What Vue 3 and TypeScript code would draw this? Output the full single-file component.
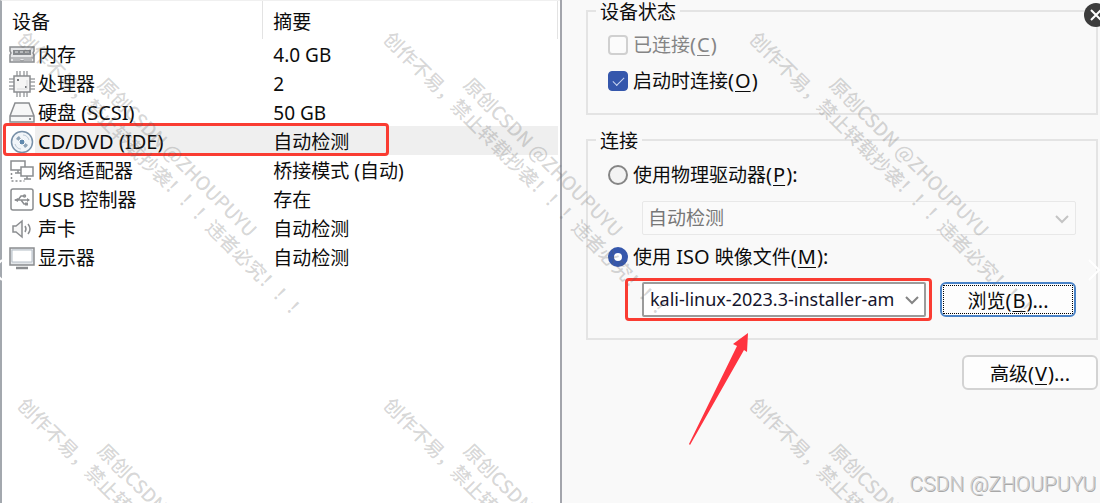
<script setup lang="ts">
import { ref } from 'vue'

interface Device {
  icon: string
  name: string
  spec?: string
  summary: string
}

const devices: Device[] = [
  { icon: 'memory', name: '内存', summary: '4.0 GB' },
  { icon: 'cpu', name: '处理器', summary: '2' },
  { icon: 'disk', name: '硬盘', spec: ' (SCSI)', summary: '50 GB' },
  { icon: 'cd', name: '', spec: 'CD/DVD (IDE)', summary: '自动检测' },
  { icon: 'network', name: '网络适配器', summary: '桥接模式 (自动)' },
  { icon: 'usb', name: 'USB 控制器', summary: '存在' },
  { icon: 'sound', name: '声卡', summary: '自动检测' },
  { icon: 'display', name: '显示器', summary: '自动检测' },
]

const selected = ref('cd')
const connected = ref(false)
const connectAtStart = ref(true)
const source = ref('iso')
const drive = ref('auto')
const iso = ref('kali')

const tiles = [0, 366].flatMap((y) => [0, 366, 732].map((x) => ({ x, y })))
</script>

<template>
  <main class="page">
    <section class="devices">
      <table>
        <thead>
          <tr>
            <th class="col-name" scope="col">设备</th>
            <th scope="col">摘要</th>
          </tr>
        </thead>
        <tbody>
          <tr
            v-for="d in devices"
            :key="d.icon"
            :class="{ selected: selected === d.icon }"
            @click="selected = d.icon"
          >
            <td>
              <div class="device">
                <svg class="icon" viewBox="0 0 26 26" fill="none" stroke="#8b8d90" stroke-width="1.5" aria-hidden="true">
                  <template v-if="d.icon === 'memory'">
                    <path d="M1 5h24v4l-1 2 1 2v7H1v-7l1-2-1-2z" fill="#e6e7e9" />
                    <path d="M4 8h18v5H4z" fill="#85888c" stroke="none" />
                    <path d="M6 10h3M11 10h3M16 10h4" stroke="#c9cbce" />
                    <path d="M2 16h23M4 18h7l2 1 2-1h8" stroke-width="1" />
                  </template>
                  <template v-else-if="d.icon === 'cpu'">
                    <path d="M8 0v5M11 0v5M15 0v5M18 0v5M8 21v5M11 21v5M15 21v5M18 21v5M0 8h5M0 11h5M0 15h5M0 18h5M21 8h5M21 11h5M21 15h5M21 18h5" stroke="#a3a5a8" />
                    <rect x="5" y="5" width="16" height="16" fill="#f5f5f5" />
                    <path d="M8 9h2M16 16h2" stroke="#77797c" stroke-width="2" />
                    <path d="M8 18h10V9" stroke="#d9dadc" stroke-width="1" />
                  </template>
                  <template v-else-if="d.icon === 'disk'">
                    <path d="M6 3h14l5 13v6H1v-6z" fill="#f7f7f7" />
                    <path d="M1 16h24" />
                    <path d="M20 19h2" stroke-width="2" />
                  </template>
                  <template v-else-if="d.icon === 'cd'">
                    <circle cx="13" cy="13" r="10.5" fill="#f1f5f9" stroke="#7890a8" />
                    <path d="M7 10a7 7 0 0 1 3-3l2 3-2 2zM19 16a7 7 0 0 1-3 3l-2-3 2-2z" fill="#8fa4b8" stroke="none" />
                    <path d="M14 6c3 0 5 2 6 5M6 15c1 3 3 5 6 5" stroke="#bdcad6" stroke-width="1" />
                    <circle cx="13" cy="13" r="3" fill="#5f88ad" stroke="#fff" stroke-width="1" />
                  </template>
                  <template v-else-if="d.icon === 'network'">
                    <path d="M2 3h14v9H2z" fill="#fff" />
                    <path d="M6 15h6M9 12v3" />
                    <path d="M12 9h12v9H12z" fill="#fff" />
                    <path d="M15 21h7M18 18v3" />
                    <path d="M2.5 15v8h13" stroke-dasharray="2 2" />
                  </template>
                  <template v-else-if="d.icon === 'usb'">
                    <rect x="2" y="2" width="22" height="21" rx="2" fill="#fff" />
                    <path d="M6 13h14M9 13l3-4h3M12 13l3 4h3" stroke-width="1.5" />
                    <path d="M5 13l4-2v4zM21 13l-3-2v4z" fill="#8b8d90" stroke="none" />
                    <circle cx="15.500" cy="9" r="1" />
                    <path d="M16 17h3" stroke-width="3" />
                  </template>
                  <template v-else-if="d.icon === 'sound'">
                    <path d="M4 10h3l6-5v16l-6-5H4z" fill="#f7f7f7" />
                    <path d="M16 10q2 3 0 6M19 8q4 5 0 10" />
                  </template>
                  <template v-else>
                    <path d="M1 3h24v17H1z" fill="#e4e7ea" />
                    <path d="M3 5h20v12H3z" fill="#fff" stroke="#b4bdc6" stroke-width="1" />
                    <path d="M7 23h12" stroke-width="2.500" />
                  </template>
                </svg>
                <span class="label">{{ d.name }}<span v-if="d.spec" class="spec">{{ d.spec }}</span></span>
              </div>
            </td>
            <td>{{ d.summary }}</td>
          </tr>
        </tbody>
      </table>
    </section>

    <section class="settings">
      <fieldset class="status">
        <legend>设备状态</legend>
        <label class="option off">
          <input v-model="connected" type="checkbox" disabled />
          <span>已连接<span class="key">(<u>C</u>)</span></span>
        </label>
        <label class="option">
          <input v-model="connectAtStart" type="checkbox" />
          <span>启动时连接<span class="key">(<u>O</u>)</span></span>
        </label>
      </fieldset>

      <fieldset class="connection">
        <legend>连接</legend>
        <label class="option">
          <input v-model="source" type="radio" name="source" value="physical" />
          <span>使用物理驱动器<span class="key">(<u>P</u>):</span></span>
        </label>
        <div class="combo drive">
          <select v-model="drive" aria-label="物理驱动器" disabled>
            <option value="auto">自动检测</option>
          </select>
          <svg class="chevron" viewBox="0 0 16 10" aria-hidden="true"><path d="M2 2l6 6 6-6" /></svg>
        </div>
        <label class="option">
          <input v-model="source" type="radio" name="source" value="iso" />
          <span>使用<span class="key"> ISO </span>映像文件<span class="key">(<u>M</u>):</span></span>
        </label>
        <div class="file">
          <div class="combo marked">
            <select v-model="iso" aria-label="ISO 映像文件">
              <option value="kali">kali-linux-2023.3-installer-amd64.iso</option>
            </select>
            <svg class="chevron" viewBox="0 0 16 10" aria-hidden="true"><path d="M2 2l6 6 6-6" /></svg>
            <svg class="arrow" viewBox="0 0 60 112" aria-hidden="true">
              <path d="M59 0L44 11l4 2L0 111l1 1L55 17l3 2z" />
            </svg>
          </div>
          <button class="btn browse" type="button">浏览<span class="key">(<u>B</u>)...</span></button>
        </div>
      </fieldset>

      <button class="btn advanced" type="button">高级<span class="key">(<u>V</u>)...</span></button>
    </section>

    <svg class="watermark" aria-hidden="true">
      <g v-for="t in tiles" :key="`${t.x}-${t.y}`" :transform="`translate(${t.x} ${t.y}) rotate(45)`">
        <text x="129" y="-7">原创CSDN @ZHOUPUYU</text>
        <text x="40" y="17">创作不易，禁止转载抄袭！！！违者必究！！！</text>
      </g>
    </svg>

    <button class="close" type="button" aria-label="关闭">
      <svg viewBox="0 0 24 24"><path d="M7 7l10 10M17 7L7 17" /></svg>
    </button>
    <button class="nav prev" type="button" aria-label="上一张">
      <svg viewBox="0 0 12 22"><path d="M11 1L1 11l10 10" /></svg>
    </button>
    <button class="nav next" type="button" aria-label="下一张">
      <svg viewBox="0 0 12 22"><path d="M1 1l10 10L1 21" /></svg>
    </button>
    <div class="credit">CSDN @ZHOUPUYU</div>
  </main>
</template>

<style>
body {
  margin: 0;
}
</style>

<style scoped>
.page {
  position: relative;
  display: grid;
  grid-template-columns: 560fr 540fr;
  min-height: 100vh;
  overflow: hidden;
  background: #f9f9f9;
  color: #0c0c0c;
  font: 19px/24px 'Noto Sans', 'Noto Sans CJK SC', sans-serif;
}

.page * {
  box-sizing: border-box;
}

u {
  padding: 0 1px;
  text-decoration-thickness: 1px;
  text-underline-offset: 3px;
}

.key,
.spec {
  font-size: 20px;
  white-space: pre-wrap;
}

.devices {
  border-left: 2px solid #a3a8ae;
  border-top: 1px solid #f0f0f0;
  background: #fff;
  padding-right: 2px;
}

table {
  width: 100%;
  border-collapse: separate;
  border-spacing: 0;
  table-layout: fixed;
}

th {
  height: 38px;
  padding: 4px 0 0 10px;
  border-right: 1px solid #e3e3e3;
  font-weight: 400;
  text-align: left;
}

.col-name {
  width: 47%;
}

td {
  height: 29px;
  padding: 2px 0 0 10px;
  white-space: nowrap;
}

td:first-child {
  position: relative;
  padding-left: 7px;
}

.device {
  display: flex;
  align-items: center;
  gap: 3px;
}

.icon {
  flex: none;
  width: 26px;
  height: 26px;
}

.selected td {
  background: #efefef;
}

.selected td:first-child {
  background: linear-gradient(90deg, #fff 33px, #efefef 33px);
}

.selected td:first-child::after {
  content: '';
  position: absolute;
  inset: -3px -48% -1px 1px;
  border: 3px solid #fa3c32;
  border-radius: 4px;
}

.settings {
  display: flex;
  flex-direction: column;
  border-left: 2px solid #a3a5ac;
  padding: 0 2px 0 24px;
}

fieldset {
  display: flex;
  flex-direction: column;
  min-width: 0;
  margin: 0;
  border: 2px solid #e4e4e4;
}

legend {
  padding: 2px 4px 0;
  line-height: 20px;
}

.status {
  gap: 12px;
  padding: 11px 20px 20px 8px;
}

.connection {
  margin-top: 14px;
  padding: 12px 20px 21px 8px;
}

.option {
  display: flex;
  align-items: center;
  gap: 5px;
  height: 24px;
  padding-left: 12px;
}

.option.off {
  color: #858585;
}

.option input {
  display: grid;
  place-items: center;
  flex: none;
  appearance: none;
  width: 20px;
  height: 20px;
  margin: 0;
  border: 1px solid #777;
  border-radius: 4px;
  background: #f3f3f3;
}

.option input:disabled {
  border: 2px solid #d0d0d0;
  background: #fbfbfb;
}

.option input[type='radio'] {
  border: 2px solid #858585;
  border-radius: 50%;
}

.option input[type='checkbox']:checked {
  border-color: #3557ac;
  background: #3557ac;
}

.option input[type='checkbox']:checked::before {
  content: '';
  width: 10px;
  height: 5px;
  margin-bottom: 3px;
  border: solid #c9d5f1;
  border-width: 0 0 1px 1px;
  transform: rotate(-45deg);
}

.option input[type='radio']:checked {
  border: 6px solid #3557ac;
  background: #fff;
}

.combo {
  position: relative;
  display: flex;
  flex: 1;
  min-width: 0;
}

.combo select {
  appearance: none;
  width: 100%;
  height: 35px;
  margin: 0;
  padding: 0 30px 2px 6px;
  border: 2px solid #9b9b9b;
  border-radius: 2px;
  background: #fff;
  color: #15152c;
  font: 18px/24px 'Noto Sans', 'Noto Sans CJK SC', sans-serif;
}

.combo.drive {
  flex: none;
  margin: 14px 0 10px 46px;
}

.combo.drive select {
  height: 34px;
  padding: 0 30px 0 5px;
  border: 1px solid #e8e8e8;
  background: #fafafa;
  color: #777;
  font-size: 19px;
  opacity: 1;
}

.chevron {
  position: absolute;
  right: 6px;
  top: 13px;
  width: 16px;
  height: 10px;
  fill: none;
  stroke: #858585;
  stroke-width: 2;
  pointer-events: none;
}

.drive .chevron {
  stroke: #c4c4c4;
}

.file {
  display: flex;
  gap: 14px;
  margin: 13px 0 0 46px;
}

.marked::after {
  content: '';
  position: absolute;
  inset: -4px -6px -4px -17px;
  border: 3px solid #fa3c32;
  border-radius: 4px;
  pointer-events: none;
}

.arrow {
  position: absolute;
  left: 47px;
  top: 51px;
  width: 60px;
  height: 112px;
  fill: #ff333f;
  pointer-events: none;
}

.btn {
  position: relative;
  flex: none;
  width: 136px;
  height: 35px;
  padding: 2px 0 0;
  border: 2px solid #d3d3d3;
  border-radius: 6px;
  background: #fdfdfd;
  color: #0c0c0c;
  font: inherit;
}

.browse {
  border-color: #4a83c7;
}

.browse::before {
  content: '';
  position: absolute;
  inset: 1px;
  border: 1px dotted #000;
}

.advanced {
  align-self: flex-end;
  margin-top: 15px;
}

.watermark {
  position: absolute;
  inset: 0;
  width: 100%;
  height: 100%;
  pointer-events: none;
  fill: rgba(100, 100, 100, 0.26);
  font: 500 19px 'Noto Sans CJK SC', sans-serif;
}

.close {
  position: absolute;
  right: -8px;
  top: 3px;
  width: 24px;
  height: 24px;
  padding: 0;
  border: 0;
  border-radius: 50%;
  background: #3c3c3c;
}

.close svg,
.nav svg {
  display: block;
  width: 100%;
  height: 100%;
  fill: none;
  stroke: #fff;
  stroke-width: 2;
}

.nav {
  position: absolute;
  top: 259px;
  width: 12px;
  height: 22px;
  padding: 0;
  border: 0;
  background: none;
}

.prev {
  left: -9px;
}

.next {
  right: 0;
}

.credit {
  position: absolute;
  right: 4px;
  bottom: 7px;
  color: #cdcdcd;
  font: 300 21px/24px Roboto, sans-serif;
  text-shadow: 1px 1px 0 #a8a8a8;
}
</style>
